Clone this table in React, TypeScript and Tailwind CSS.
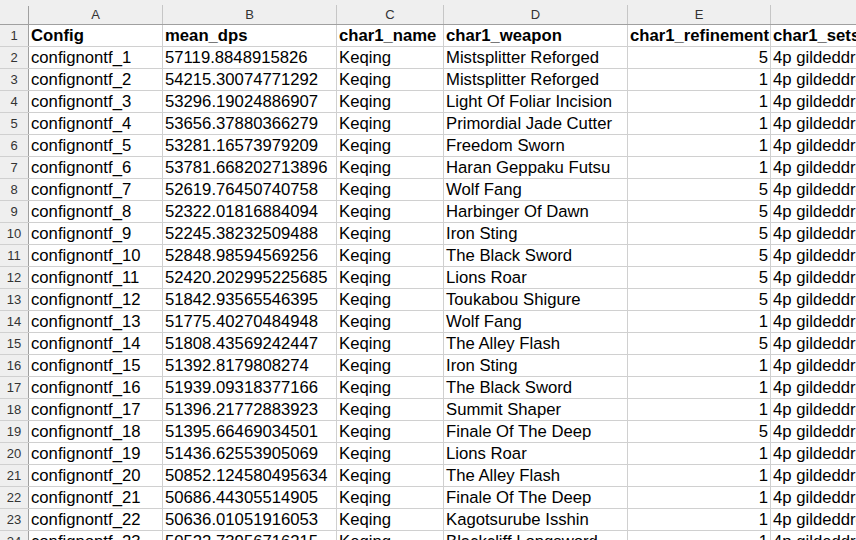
import React from "react";

const rows: [string, string, string, string, string, string][] = [
  ["confignontf_1", "57119.8848915826", "Keqing", "Mistsplitter Reforged", "5", "4p gildeddreams"],
  ["confignontf_2", "54215.30074771292", "Keqing", "Mistsplitter Reforged", "1", "4p gildeddreams"],
  ["confignontf_3", "53296.19024886907", "Keqing", "Light Of Foliar Incision", "1", "4p gildeddreams"],
  ["confignontf_4", "53656.37880366279", "Keqing", "Primordial Jade Cutter", "1", "4p gildeddreams"],
  ["confignontf_5", "53281.16573979209", "Keqing", "Freedom Sworn", "1", "4p gildeddreams"],
  ["confignontf_6", "53781.668202713896", "Keqing", "Haran Geppaku Futsu", "1", "4p gildeddreams"],
  ["confignontf_7", "52619.76450740758", "Keqing", "Wolf Fang", "5", "4p gildeddreams"],
  ["confignontf_8", "52322.01816884094", "Keqing", "Harbinger Of Dawn", "5", "4p gildeddreams"],
  ["confignontf_9", "52245.38232509488", "Keqing", "Iron Sting", "5", "4p gildeddreams"],
  ["confignontf_10", "52848.98594569256", "Keqing", "The Black Sword", "5", "4p gildeddreams"],
  ["confignontf_11", "52420.202995225685", "Keqing", "Lions Roar", "5", "4p gildeddreams"],
  ["confignontf_12", "51842.93565546395", "Keqing", "Toukabou Shigure", "5", "4p gildeddreams"],
  ["confignontf_13", "51775.40270484948", "Keqing", "Wolf Fang", "1", "4p gildeddreams"],
  ["confignontf_14", "51808.43569242447", "Keqing", "The Alley Flash", "5", "4p gildeddreams"],
  ["confignontf_15", "51392.8179808274", "Keqing", "Iron Sting", "1", "4p gildeddreams"],
  ["confignontf_16", "51939.09318377166", "Keqing", "The Black Sword", "1", "4p gildeddreams"],
  ["confignontf_17", "51396.21772883923", "Keqing", "Summit Shaper", "1", "4p gildeddreams"],
  ["confignontf_18", "51395.66469034501", "Keqing", "Finale Of The Deep", "5", "4p gildeddreams"],
  ["confignontf_19", "51436.62553905069", "Keqing", "Lions Roar", "1", "4p gildeddreams"],
  ["confignontf_20", "50852.124580495634", "Keqing", "The Alley Flash", "1", "4p gildeddreams"],
  ["confignontf_21", "50686.44305514905", "Keqing", "Finale Of The Deep", "1", "4p gildeddreams"],
  ["confignontf_22", "50636.01051916053", "Keqing", "Kagotsurube Isshin", "1", "4p gildeddreams"],
  ["confignontf_23", "50522.73956716215", "Keqing", "Blackcliff Longsword", "1", "4p gildeddreams"],
];

const cellW = ["w-[134px]", "w-[174px]", "w-[107px]", "w-[184px]", "w-[143px]", "w-[120px]"];
const letters = ["A", "B", "C", "D", "E", ""];
const headers = ["Config", "mean_dps", "char1_name", "char1_weapon", "char1_refinement", "char1_sets"];

export default function App() {
  return (
    <div
      className="w-[856px] h-[540px] overflow-hidden bg-white text-black"
      style={{ fontFamily: '"Liberation Sans", Arial, sans-serif' }}
    >
      <div className="flex h-[25px] bg-[#efefef] border-b border-[#a0a0a0]">
        <div className="w-[29px] shrink-0 flex items-end">
          <div className="ml-auto h-[18px] border-r border-[#a0a0a0]" />
        </div>
        {letters.map((l, i) => (
          <div key={i} className={`${cellW[i]} shrink-0 flex flex-col`}>
            <div className="h-[6px]" />
            <div
              className={`flex-1 flex items-center justify-center text-[13px] text-[#333] ${
                i < 5 ? "border-r border-[#c6c6c6]" : ""
              }`}
            >
              {l}
            </div>
          </div>
        ))}
      </div>
      {[headers as unknown as string[], ...rows].map((r, ri) => (
        <div key={ri} className="flex h-[22px] border-b border-[#d0d0d0]">
          <div className="w-[29px] shrink-0 bg-[#efefef] border-r border-[#a0a0a0] flex items-center justify-center text-[13px] text-[#333]">
            {ri + 1}
          </div>
          {r.map((c, ci) => (
            <div
              key={ci}
              className={`${cellW[ci]} shrink-0 ${ci < 5 ? "border-r border-[#d0d0d0]" : ""} flex items-center overflow-hidden whitespace-nowrap text-[16.7px] leading-[22px] pt-[1px] ${
                ri === 0 ? "font-bold" : ""
              } ${ri > 0 && ci === 4 ? "justify-end pr-[2px]" : "pl-[2px]"}`}
            >
              {c}
            </div>
          ))}
        </div>
      ))}
    </div>
  );
}
